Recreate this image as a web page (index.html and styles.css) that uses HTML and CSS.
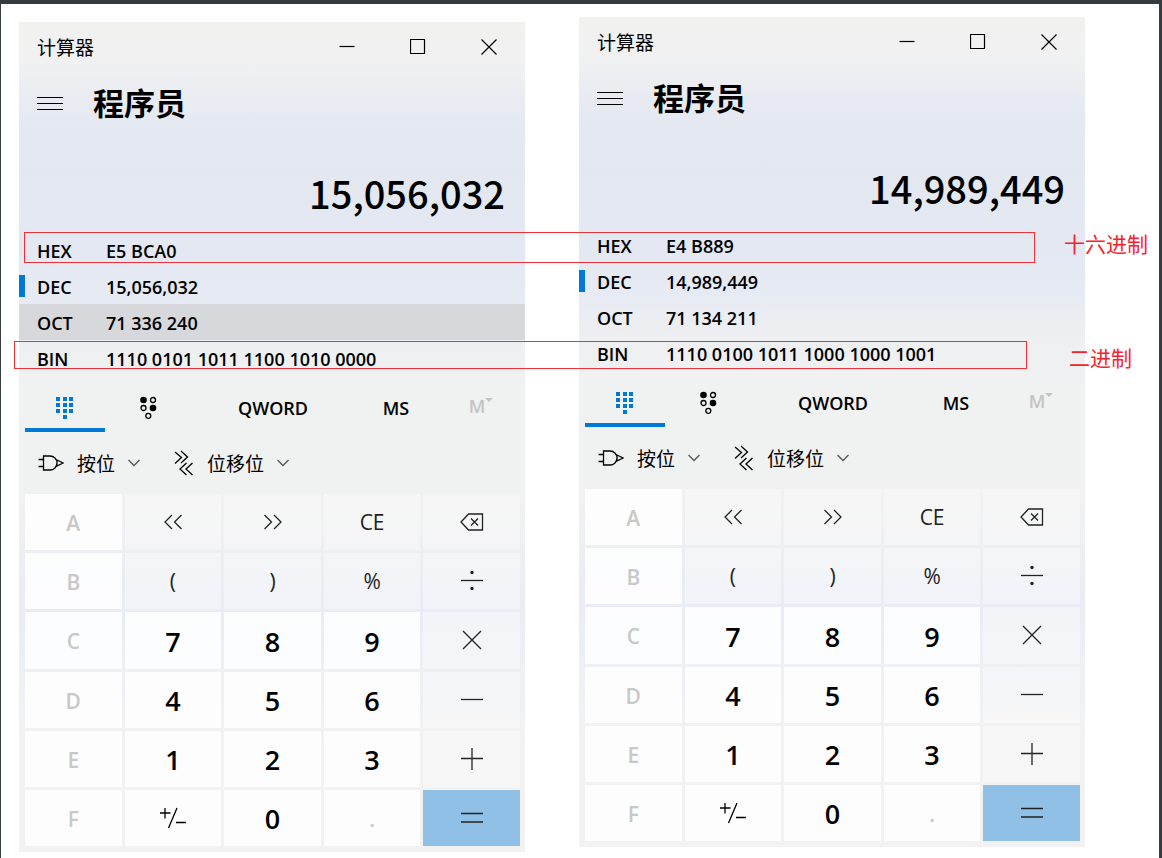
FILE: index.html
```html
<!DOCTYPE html>
<html lang="zh-CN">
<head>
<meta charset="utf-8">
<meta name="viewport" content="width=device-width, initial-scale=1">
<title>计算器</title>
<link rel="stylesheet" href="styles.css">
</head>
<body>
<svg class="sprite" aria-hidden="true">
  <symbol id="i-min" viewBox="0 0 16 16"><path d="M.5 7.5h15"/></symbol>
  <symbol id="i-max" viewBox="0 0 16 16"><path d="M.5.5h14v14h-14z"/></symbol>
  <symbol id="i-close" viewBox="0 0 16 16"><path d="M.5.5l15 15M15.500.5l-15 15"/></symbol>
  <symbol id="i-menu" viewBox="0 0 26 16"><path d="M0 1.500h26M0 7.500h26M0 13.500h26"/></symbol>
  <symbol id="i-pad" viewBox="0 0 18 24"><path class="solid" d="M0 1h4v4H0zM7 1h4v4H7zM13 1h4v4h-4zM0 7h4v4H0zM7 7h4v4H7zM13 7h4v4h-4zM0 13h4v4H0zM7 13h4v4H7zM13 13h4v4h-4zM7 19h4v4H7z"/></symbol>
  <symbol id="i-bits" viewBox="0 0 18 24"><circle class="solid" cx="4.500" cy="4" r="3.300"/><circle cx="14" cy="4" r="2.500"/><circle cx="4.500" cy="12" r="2.500"/><circle class="solid" cx="14" cy="12" r="3.300"/><circle cx="9.300" cy="19.800" r="2.500"/></symbol>
  <symbol id="i-gate" viewBox="0 0 26 16"><path d="M5.500 1h6.500a7 7 0 0 1 0 14H5.500zM.5 4.500h5M.5 11.500h5M19 5l6 3-6 3z"/></symbol>
  <symbol id="i-shift" viewBox="0 0 20 26"><path d="M1 2l6.500 5.500L1 13.500M7 1l6.500 6L7 13M12.500 13L6 19l6.500 6M18.500 13L12 19l6.500 6"/></symbol>
  <symbol id="i-down" viewBox="0 0 12 8"><path d="M.5 1L6 6.500 11.500 1"/></symbol>
  <symbol id="i-lsh" viewBox="0 0 20 16"><path d="M9 1L2 8l7 7M18.500 1l-7 7 7 7"/></symbol>
  <symbol id="i-rsh" viewBox="0 0 20 16"><path d="M2.500 1l7 7-7 7M12 1l7 7-7 7"/></symbol>
  <symbol id="i-back" viewBox="0 0 24 18"><path d="M8.500 1h14v16h-14L1 9zM11 5.500l7 7M18 5.500l-7 7"/></symbol>
  <symbol id="i-div" viewBox="0 0 22 22"><path d="M0 10.500h22"/><circle class="solid" cx="11" cy="2.500" r="1.700"/><circle class="solid" cx="11" cy="18.500" r="1.700"/></symbol>
  <symbol id="i-mul" viewBox="0 0 22 22"><path d="M2 2l18 18M20 2L2 20"/></symbol>
  <symbol id="i-sub" viewBox="0 0 22 22"><path d="M0 10.500h22"/></symbol>
  <symbol id="i-add" viewBox="0 0 22 22"><path d="M0 10.500h22M11 0v22"/></symbol>
  <symbol id="i-eq" viewBox="0 0 22 22"><path d="M0 6.500h22M0 15h22"/></symbol>
  <symbol id="i-neg" viewBox="0 0 26 22"><path d="M0 6h10.500M5 1v10.500M17 1L8.500 21M16 15.500h10"/></symbol>
</svg>

<main class="board">
  <div class="calc" data-dec="15,056,032" data-hex="E5 BCA0" data-oct="71 336 240" data-bin="1110 0101 1011 1100 1010 0000" data-hover="oct"></div>
  <div class="calc calc-raised" data-dec="14,989,449" data-hex="E4 B889" data-oct="71 134 211" data-bin="1110 0100 1011 1000 1000 1001"></div>
  <div class="mark mark-hex"></div>
  <div class="mark mark-bin"></div>
  <span class="note note-hex">十六进制</span>
  <span class="note note-bin">二进制</span>
</main>

<template id="calc">
  <header class="titlebar">
    <span class="app-name">计算器</span>
    <button class="win" aria-label="最小化"><svg class="ic s16"><use href="#i-min"/></svg></button>
    <button class="win" aria-label="最大化"><svg class="ic s16"><use href="#i-max"/></svg></button>
    <button class="win" aria-label="关闭"><svg class="ic s16"><use href="#i-close"/></svg></button>
  </header>
  <nav class="mode">
    <button class="menu" aria-label="菜单"><svg class="ic w26"><use href="#i-menu"/></svg></button>
    <h1 class="mode-name">程序员</h1>
  </nav>
  <output class="display"></output>
  <div class="radix">
    <button class="base" data-base="hex"><span>HEX</span><span class="value"></span></button>
    <button class="base current" data-base="dec"><span>DEC</span><span class="value"></span></button>
    <button class="base" data-base="oct"><span>OCT</span><span class="value"></span></button>
    <button class="base" data-base="bin"><span>BIN</span><span class="value"></span></button>
  </div>
  <div class="tabs">
    <button class="tab active" aria-label="全键盘"><svg class="ic pad"><use href="#i-pad"/></svg></button>
    <button class="tab" aria-label="位切换键盘"><svg class="ic pad"><use href="#i-bits"/></svg></button>
    <button class="tab">QWORD</button>
    <button class="tab">MS</button>
    <button class="tab memory" disabled>M<i class="caret"></i></button>
  </div>
  <div class="tools">
    <button class="tool"><svg class="ic w26"><use href="#i-gate"/></svg><span>按位</span><svg class="ic down"><use href="#i-down"/></svg></button>
    <button class="tool"><svg class="ic shift"><use href="#i-shift"/></svg><span>位移位</span><svg class="ic down"><use href="#i-down"/></svg></button>
  </div>
  <div class="keys">
    <button class="key hexkey" disabled>A</button>
    <button class="key op" aria-label="左移"><svg class="ic w20"><use href="#i-lsh"/></svg></button>
    <button class="key op" aria-label="右移"><svg class="ic w20"><use href="#i-rsh"/></svg></button>
    <button class="key op">CE</button>
    <button class="key op" aria-label="退格"><svg class="ic back"><use href="#i-back"/></svg></button>
    <button class="key hexkey" disabled>B</button>
    <button class="key op">(</button>
    <button class="key op">)</button>
    <button class="key op">%</button>
    <button class="key op" aria-label="除"><svg class="ic s22"><use href="#i-div"/></svg></button>
    <button class="key hexkey" disabled>C</button>
    <button class="key num">7</button><button class="key num">8</button><button class="key num">9</button>
    <button class="key op" aria-label="乘"><svg class="ic s22"><use href="#i-mul"/></svg></button>
    <button class="key hexkey" disabled>D</button>
    <button class="key num">4</button><button class="key num">5</button><button class="key num">6</button>
    <button class="key op" aria-label="减"><svg class="ic s22"><use href="#i-sub"/></svg></button>
    <button class="key hexkey" disabled>E</button>
    <button class="key num">1</button><button class="key num">2</button><button class="key num">3</button>
    <button class="key op" aria-label="加"><svg class="ic s22"><use href="#i-add"/></svg></button>
    <button class="key hexkey" disabled>F</button>
    <button class="key" aria-label="正负"><svg class="ic neg"><use href="#i-neg"/></svg></button>
    <button class="key num">0</button>
    <button class="key hexkey" disabled>.</button>
    <button class="key equals" aria-label="等于"><svg class="ic s22"><use href="#i-eq"/></svg></button>
  </div>
</template>
<script src="app.js"></script>
</body>
</html>
```

FILE: styles.css
```css
* { box-sizing: border-box; }

body {
  margin: 0;
  min-height: 100vh;
  border: solid #363b40;
  border-width: 4px 3px 0 1px;
  background: #fff;
  color: #000;
  font-family: "Open Sans", "Noto Sans", "Noto Sans CJK SC", sans-serif;
}

button {
  margin: 0;
  padding: 0;
  border: 0;
  background: none;
  color: inherit;
  font: inherit;
}

.sprite { position: absolute; width: 0; height: 0; }

.ic {
  display: block;
  flex: none;
  fill: none;
  stroke: currentColor;
  stroke-width: 1.3;
}
.solid { fill: currentColor; stroke: none; }
.s16 { width: 16px; height: 16px; stroke-width: 1.2; }
.s22 { width: 22px; height: 22px; }
.w20 { width: 20px; height: 16px; }
.w26 { width: 26px; height: 16px; }
.menu .ic { stroke-width: 1.2; }
.back { width: 24px; height: 18px; }
.neg { width: 26px; height: 22px; }
.pad { width: 18px; height: 24px; }
.shift { width: 20px; height: 26px; }
.down { width: 12px; height: 8px; color: #555; }

.board {
  position: relative;
  display: flex;
  align-items: flex-start;
  gap: 54px;
  padding: 18px 74px 0 18px;
}

.calc {
  flex: 1;
  min-width: 0;
  background: linear-gradient(#f1f1ef 0, #f0f1f1 40px, #e5e9f1 96px, #e2e7f0 150px, #e3e8f2 230px, #e6eaf3 275px, #eeeff1 320px, #f0f1f1 370px, #f1f1f1 480px, #e9ecf4 580px, #eceff4 640px, #f2f2f2 720px, #f2f2f2 100%);
}
.calc-raised { margin-top: -5px; }

.titlebar { display: flex; align-items: center; height: 50px; padding: 0 1px 0 18px; }
.app-name {
  flex: 1;
  font: 19px/24px "Noto Sans CJK SC", sans-serif;
}
.win { display: flex; justify-content: center; align-items: center; width: 71px; height: 50px; }

.mode { display: flex; align-items: center; gap: 30px; height: 64px; padding-left: 18px; }
.mode-name { margin: 0; padding-bottom: 4px; font: bold 31px/40px "Noto Sans CJK SC", sans-serif; }

.display {
  display: block;
  padding: 21px 20px 3px 0;
  text-align: right;
  font: 500 38px/72px "Noto Sans CJK SC", sans-serif;
}

.base {
  display: grid;
  grid-template-columns: 69px 1fr;
  align-items: center;
  width: 100%;
  height: 36px;
  padding: 2px 0 0 18px;
  text-align: left;
  font-size: 18px;
  font-weight: 600;
  position: relative;
}
.base.hovered { background: #d7d8dc; }
.current::before {
  content: "";
  position: absolute;
  left: 0;
  top: 7px;
  width: 6px;
  height: 22px;
  background: #0078d7;
}

.tabs {
  display: grid;
  grid-template-columns: 80fr 86fr 164fr 82fr 88fr;
  height: 56px;
  padding-left: 6px;
  font-size: 18px;
  font-weight: 600;
}
.tab { display: flex; justify-content: center; align-items: center; padding-top: 11px; border-bottom: 4px solid transparent; }
.tab.active { border-color: #0078d7; }
.active .ic { color: #0078d7; }
.memory { padding-top: 8px; color: #c4c4c4; }
.caret { border: solid transparent; border-width: 4px 4px 0; border-top-color: #c4c4c4; margin-bottom: 12px; }

.tools {
  display: flex;
  align-items: center;
  gap: 34px;
  height: 62px;
  padding-left: 19px;
  font: 19px/24px "Noto Sans CJK SC", sans-serif;
}
.tool { display: flex; align-items: center; gap: 13px; }

.keys {
  display: grid;
  grid-template: repeat(6, 1fr) / repeat(5, 1fr);
  gap: 3px;
  height: 358px;
  padding: 0 5px 6px 6px;
}
.key {
  display: flex;
  justify-content: center;
  align-items: center;
  background: rgba(255, 255, 255, .85);
}
.num { padding-top: 2px; font-size: 27px; font-weight: 600; }
.op { background: rgba(255, 255, 255, .4); font-size: 21px; color: #222; }
.hexkey { padding-top: 2px; color: #c8c8c8; font-size: 21px; font-weight: 600; }
.equals { background: #91c0e7; color: #222; }

.mark { position: absolute; border: 1px solid #ee3038; }
.mark-hex { left: 23px; right: 124px; top: 228px; height: 31px; }
.mark-bin { left: 13px; right: 132px; top: 337px; height: 28px; }

.note { position: absolute; color: #f5222d; font: 21px/28px "Noto Sans CJK SC", sans-serif; }
.note-hex { right: 11px; top: 225px; }
.note-bin { right: 27px; top: 339px; }
```

FILE: app.js
```js
const template = document.getElementById("calc");
document.querySelectorAll(".calc").forEach((calc) => {
  calc.append(template.content.cloneNode(true));
  calc.querySelector(".display").textContent = calc.dataset.dec;
  calc.querySelectorAll(".base").forEach((row) => {
    row.querySelector(".value").textContent = calc.dataset[row.dataset.base];
    row.classList.toggle("hovered", calc.dataset.hover === row.dataset.base);
  });
});
```
